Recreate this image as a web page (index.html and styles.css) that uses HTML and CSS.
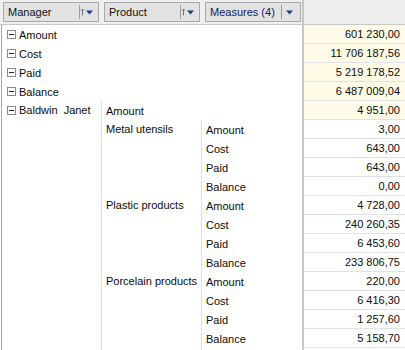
FILE: index.html
```html
<!DOCTYPE html>
<html lang="en">
<head>
  <meta charset="UTF-8" />
  <title>Pivot grid</title>
  <link rel="stylesheet" href="styles.css">
</head>
<body>

  <div class="toolbar">
    <div class="fields">
      <div class="field">
        <span class="field-name">Manager</span>
        <span class="field-btn">
          <svg width="15" height="8" viewBox="0 0 15 8"><path d="M2.5 7.5V1M1 2.5L2.5 1L4 2.5" fill="none" stroke="#6a7486" stroke-width="1"/><path d="M6 2.5h7l-3.5 4z" fill="#1d3a86"/></svg>
        </span>
      </div>
      <div class="field">
        <span class="field-name">Product</span>
        <span class="field-btn">
          <svg width="15" height="8" viewBox="0 0 15 8"><path d="M2.5 7.5V1M1 2.5L2.5 1L4 2.5" fill="none" stroke="#6a7486" stroke-width="1"/><path d="M6 2.5h7l-3.5 4z" fill="#1d3a86"/></svg>
        </span>
      </div>
      <div class="field measures">
        <span class="field-name">Measures (4)</span>
        <span class="field-btn">
          <svg width="15" height="8" viewBox="0 0 15 8"><path d="M4 2.5h7l-3.5 4z" fill="#1d3a86"/></svg>
        </span>
      </div>
    </div>
    <div class="corner"></div>
  </div>

  <div class="pivot">
    <div class="cell full"><span class="minus"></span>Amount</div>
    <div class="val total">601 230,00</div>
    <div class="cell full"><span class="minus"></span>Cost</div>
    <div class="val total">11 706 187,56</div>
    <div class="cell full"><span class="minus"></span>Paid</div>
    <div class="val total">5 219 178,52</div>
    <div class="cell full"><span class="minus"></span>Balance</div>
    <div class="val total">6 487 009,04</div>

    <div class="cell lvl0 group"><span class="minus"></span>Baldwin&nbsp; Janet</div>
    <div class="cell wide">Amount</div>
    <div class="val total">4 951,00</div>

    <div class="cell lvl1 sub">Metal utensils</div>
    <div class="cell lvl2">Amount</div>
    <div class="val">3,00</div>
    <div class="cell lvl2">Cost</div>
    <div class="val">643,00</div>
    <div class="cell lvl2">Paid</div>
    <div class="val">643,00</div>
    <div class="cell lvl2">Balance</div>
    <div class="val">0,00</div>

    <div class="cell lvl1 sub">Plastic products</div>
    <div class="cell lvl2">Amount</div>
    <div class="val">4 728,00</div>
    <div class="cell lvl2">Cost</div>
    <div class="val">240 260,35</div>
    <div class="cell lvl2">Paid</div>
    <div class="val">6 453,60</div>
    <div class="cell lvl2">Balance</div>
    <div class="val">233 806,75</div>

    <div class="cell lvl1 sub">Porcelain products</div>
    <div class="cell lvl2">Amount</div>
    <div class="val">220,00</div>
    <div class="cell lvl2">Cost</div>
    <div class="val">6 416,30</div>
    <div class="cell lvl2">Paid</div>
    <div class="val">1 257,60</div>
    <div class="cell lvl2">Balance</div>
    <div class="val">5 158,70</div>

    <div class="cell lvl1"></div>
    <div class="cell lvl2"></div>
    <div class="val"></div>
  </div>

</body>
</html>
```

FILE: styles.css
```css
* {
  box-sizing: border-box;
}

body {
  margin: 0;
  font-family: "Liberation Sans", Arial, sans-serif;
  font-size: 11px;
  color: #000;
  background: #fff;
  overflow: hidden;
}

.toolbar {
  display: flex;
  height: 25px;
  background: #efefef;
  border-bottom: 1px solid #c8c8c8;
}

.fields {
  width: 302px;
  display: flex;
  gap: 5px;
  padding: 2px 0 0 3px;
}

.field {
  width: 96px;
  height: 20px;
  display: flex;
  align-items: center;
  border: 1px solid #a9a9a9;
  background: #e2e2e2;
  color: #111;
}

.field.measures {
  color: #14196a;
}

.field-name {
  flex: 1;
  padding-left: 4px;
  white-space: nowrap;
}

.field-btn {
  width: 19px;
  height: 14px;
  display: flex;
  align-items: center;
  border-left: 1px solid #9c9c9c;
}

.corner {
  flex: 1;
  border-left: 2px solid #c6c6c6;
}

.pivot {
  display: grid;
  grid-template-columns: 99px 100px 101px 1fr;
  grid-auto-rows: 19px;
  margin-left: 1px;
  border-left: 1px solid #a4a4a4;
}

.cell {
  display: flex;
  align-items: center;
  padding-left: 4px;
  white-space: nowrap;
  color: #0c0c0c;
}

.full {
  grid-column: 1 / 4;
}

.lvl0 {
  grid-column: 1;
  align-items: flex-start;
  padding-top: 3px;
}

.group {
  grid-row: span 14;
}

.wide {
  grid-column: 2 / 4;
  border-left: 1px solid #dedede;
}

.lvl1 {
  grid-column: 2;
  align-items: flex-start;
  padding-top: 3px;
  border-left: 1px solid #dedede;
}

.sub {
  grid-row: span 4;
}

.lvl2 {
  grid-column: 3;
  border-left: 1px solid #dedede;
}

.minus {
  width: 9px;
  height: 9px;
  margin: 0 3px 0 1px;
  border: 1px solid #8b8b8b;
  background: #fff;
  position: relative;
  flex: none;
}

.lvl0 .minus {
  margin-top: 2px;
}

.minus::before {
  content: "";
  position: absolute;
  left: 1px;
  top: 3px;
  width: 5px;
  height: 1px;
  background: #222;
}

.val {
  grid-column: 4;
  display: flex;
  align-items: center;
  justify-content: flex-end;
  padding-right: 5px;
  border-left: 2px solid #c6c6c6;
  border-bottom: 1px solid #dfe2e8;
  background: #fff;
  color: #0c0c0c;
}

.val.total {
  background: #fffbe6;
}
```
